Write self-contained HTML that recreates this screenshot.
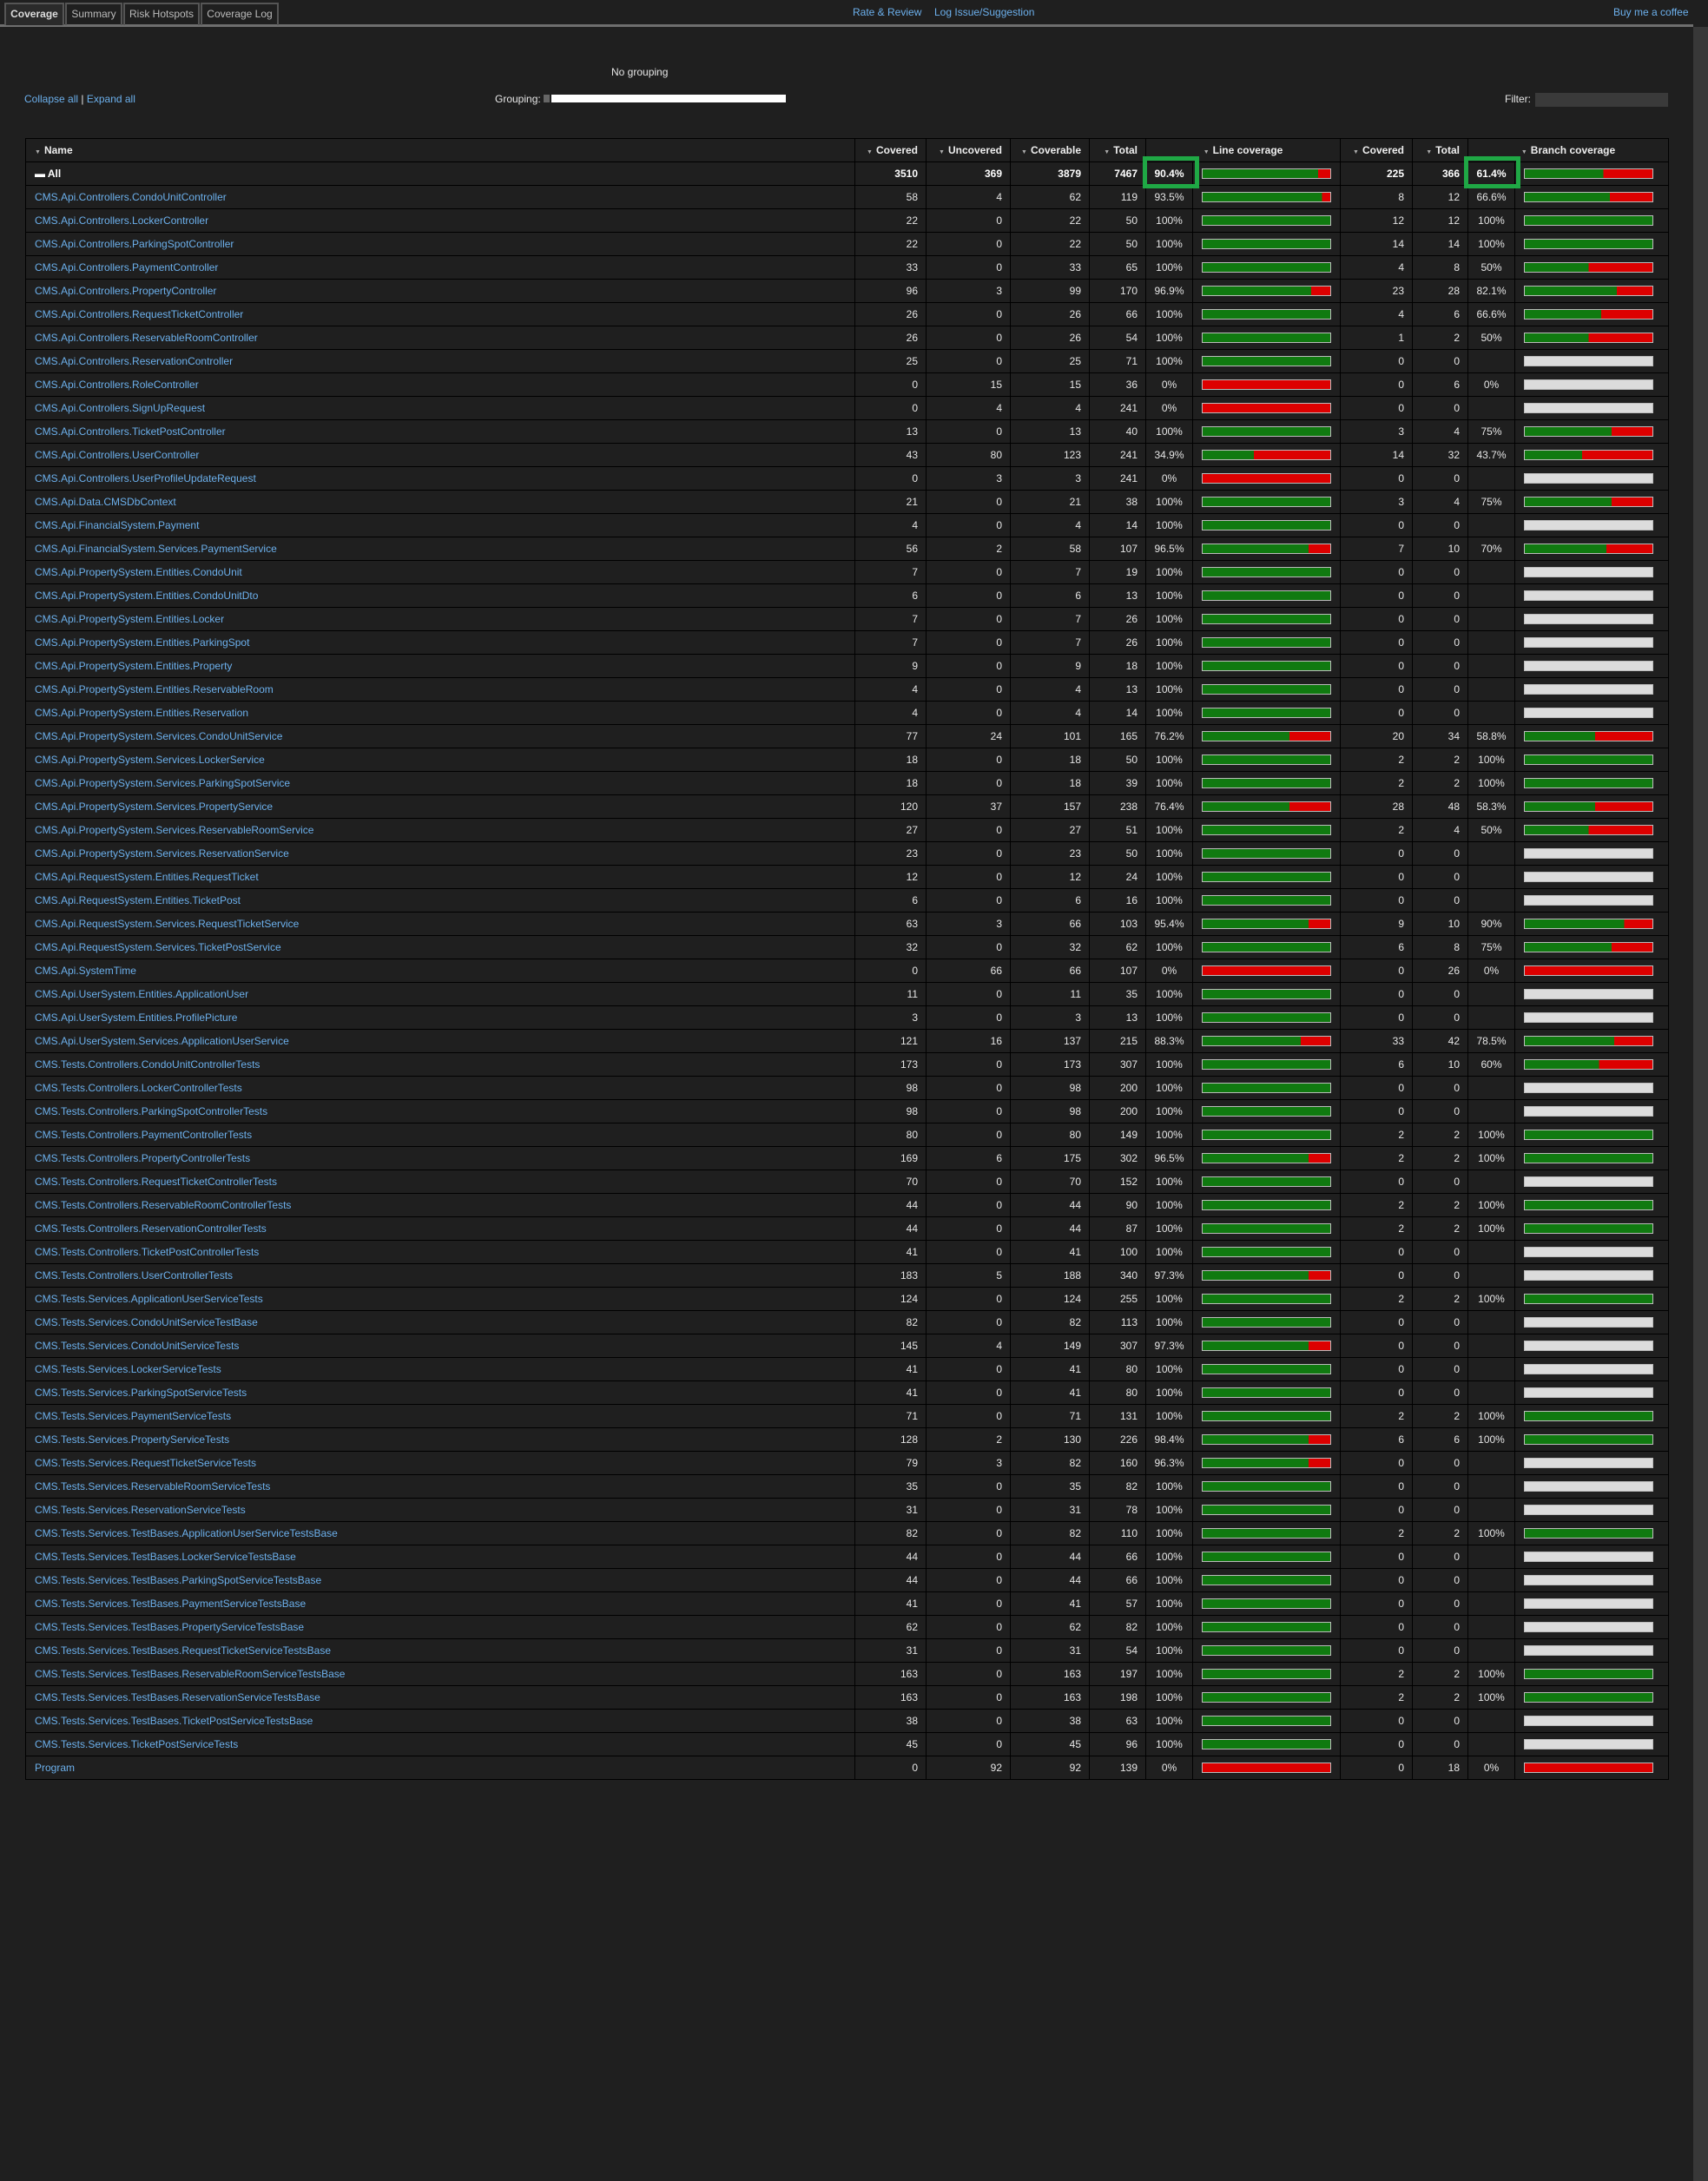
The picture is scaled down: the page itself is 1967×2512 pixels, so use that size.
<!DOCTYPE html>
<html><head><meta charset="utf-8"><style>
*{box-sizing:border-box}
html,body{margin:0;padding:0}
body{width:1967px;height:2512px;background:#1f1f1f;color:#e6e6e6;font-family:"Liberation Sans",sans-serif;font-size:11px;position:relative;overflow:hidden}
a{color:#6cb0ec;text-decoration:none}
.tabs{position:absolute;left:0;top:0;width:1950px;height:31px;border-bottom:3px solid #6e6e6e}
.tab{position:absolute;top:3px;height:26px;border:2px solid #555;border-bottom:none;color:#bbb;font-size:12px;line-height:23px;text-align:center}
.tab.act{background:#2a2a2a;color:#ddd;font-weight:bold}
.sb{position:absolute;right:0;top:31px;width:17px;height:2481px;background:#383838}
.top a{position:absolute;top:7px;font-size:12px}
.abs{position:absolute}
table{position:absolute;left:29px;top:159px;border-collapse:collapse;table-layout:fixed;width:1892px;font-size:12px}
td,th{border:1px solid #000;height:27px;padding:0 9px 0 0;text-align:right;white-space:nowrap;overflow:hidden}
th{font-weight:bold;color:#eee}
th .ar,.ar{color:#aaa;font-size:7px;margin-right:4px}
td.n,th.n{text-align:left;padding-left:10px}
td.p{text-align:center;padding:0}
td.b{text-align:left;padding:0 0 0 10px}
td.b i{display:block;width:149px;height:12px;border:1px solid #bbb;background:linear-gradient(90deg,#107a10 var(--g),#dd0000 0)}
td.b i.z{background:#dcdcdc}
tr.all td{font-weight:bold;color:#fff}
.hl{position:absolute;border:5px solid #1fa845;width:65px;height:37px;top:180px}
</style></head><body>
<div class="tabs">
<div class="tab act" style="left:5px;width:69px">Coverage</div>
<div class="tab" style="left:75px;width:66px">Summary</div>
<div class="tab" style="left:142px;width:88px">Risk Hotspots</div>
<div class="tab" style="left:231px;width:90px">Coverage Log</div>
</div>
<div class="top"><a style="left:982px">Rate &amp; Review</a><a style="left:1076px">Log Issue/Suggestion</a><a style="left:1858px">Buy me a coffee</a></div>
<div class="sb"></div>
<div class="abs" style="left:704px;top:76px;font-size:12px">No grouping</div>
<div class="abs" style="left:28px;top:107px;font-size:12px"><a>Collapse all</a> | <a>Expand all</a></div>
<div class="abs" style="left:570px;top:107px;font-size:12px">Grouping:</div>
<div class="abs" style="left:626px;top:109px;width:7px;height:9px;background:#666"></div>
<div class="abs" style="left:635px;top:109px;width:270px;height:9px;background:#fff"></div>
<div class="abs" style="left:1733px;top:107px;font-size:12px">Filter:</div>
<div class="abs" style="left:1768px;top:107px;width:153px;height:16px;background:#3a3a3a"></div>
<table>
<colgroup><col style="width:955px"><col style="width:82px"><col style="width:97px"><col style="width:91px"><col style="width:65px"><col style="width:54px"><col style="width:170px"><col style="width:83px"><col style="width:64px"><col style="width:54px"><col style="width:177px"></colgroup>
<tr><th class="n"><span class="ar">▼</span>Name</th><th><span class="ar">▼</span>Covered</th><th><span class="ar">▼</span>Uncovered</th><th><span class="ar">▼</span>Coverable</th><th><span class="ar">▼</span>Total</th><th colspan="2" style="text-align:center;padding:0"><span class="ar">▼</span>Line coverage</th><th><span class="ar">▼</span>Covered</th><th><span class="ar">▼</span>Total</th><th colspan="2" style="text-align:center;padding:0"><span class="ar">▼</span>Branch coverage</th></tr>
<tr class="all"><td class="n">▬ All</td><td>3510</td><td>369</td><td>3879</td><td>7467</td><td class="p">90.4%</td><td class="b"><i style="--g:90.4%"></i></td><td>225</td><td>366</td><td class="p">61.4%</td><td class="b"><i style="--g:61.4%"></i></td></tr>
<tr><td class="n"><a>CMS.Api.Controllers.CondoUnitController</a></td><td>58</td><td>4</td><td>62</td><td>119</td><td class="p">93.5%</td><td class="b"><i style="--g:93.5%"></i></td><td>8</td><td>12</td><td class="p">66.6%</td><td class="b"><i style="--g:66.6%"></i></td></tr>
<tr><td class="n"><a>CMS.Api.Controllers.LockerController</a></td><td>22</td><td>0</td><td>22</td><td>50</td><td class="p">100%</td><td class="b"><i style="--g:100%"></i></td><td>12</td><td>12</td><td class="p">100%</td><td class="b"><i style="--g:100%"></i></td></tr>
<tr><td class="n"><a>CMS.Api.Controllers.ParkingSpotController</a></td><td>22</td><td>0</td><td>22</td><td>50</td><td class="p">100%</td><td class="b"><i style="--g:100%"></i></td><td>14</td><td>14</td><td class="p">100%</td><td class="b"><i style="--g:100%"></i></td></tr>
<tr><td class="n"><a>CMS.Api.Controllers.PaymentController</a></td><td>33</td><td>0</td><td>33</td><td>65</td><td class="p">100%</td><td class="b"><i style="--g:100%"></i></td><td>4</td><td>8</td><td class="p">50%</td><td class="b"><i style="--g:50%"></i></td></tr>
<tr><td class="n"><a>CMS.Api.Controllers.PropertyController</a></td><td>96</td><td>3</td><td>99</td><td>170</td><td class="p">96.9%</td><td class="b"><i style="--g:85%"></i></td><td>23</td><td>28</td><td class="p">82.1%</td><td class="b"><i style="--g:72%"></i></td></tr>
<tr><td class="n"><a>CMS.Api.Controllers.RequestTicketController</a></td><td>26</td><td>0</td><td>26</td><td>66</td><td class="p">100%</td><td class="b"><i style="--g:100%"></i></td><td>4</td><td>6</td><td class="p">66.6%</td><td class="b"><i style="--g:60%"></i></td></tr>
<tr><td class="n"><a>CMS.Api.Controllers.ReservableRoomController</a></td><td>26</td><td>0</td><td>26</td><td>54</td><td class="p">100%</td><td class="b"><i style="--g:100%"></i></td><td>1</td><td>2</td><td class="p">50%</td><td class="b"><i style="--g:50%"></i></td></tr>
<tr><td class="n"><a>CMS.Api.Controllers.ReservationController</a></td><td>25</td><td>0</td><td>25</td><td>71</td><td class="p">100%</td><td class="b"><i style="--g:100%"></i></td><td>0</td><td>0</td><td class="p"></td><td class="b"><i class="z"></i></td></tr>
<tr><td class="n"><a>CMS.Api.Controllers.RoleController</a></td><td>0</td><td>15</td><td>15</td><td>36</td><td class="p">0%</td><td class="b"><i style="--g:0%"></i></td><td>0</td><td>6</td><td class="p">0%</td><td class="b"><i class="z"></i></td></tr>
<tr><td class="n"><a>CMS.Api.Controllers.SignUpRequest</a></td><td>0</td><td>4</td><td>4</td><td>241</td><td class="p">0%</td><td class="b"><i style="--g:0%"></i></td><td>0</td><td>0</td><td class="p"></td><td class="b"><i class="z"></i></td></tr>
<tr><td class="n"><a>CMS.Api.Controllers.TicketPostController</a></td><td>13</td><td>0</td><td>13</td><td>40</td><td class="p">100%</td><td class="b"><i style="--g:100%"></i></td><td>3</td><td>4</td><td class="p">75%</td><td class="b"><i style="--g:68%"></i></td></tr>
<tr><td class="n"><a>CMS.Api.Controllers.UserController</a></td><td>43</td><td>80</td><td>123</td><td>241</td><td class="p">34.9%</td><td class="b"><i style="--g:40%"></i></td><td>14</td><td>32</td><td class="p">43.7%</td><td class="b"><i style="--g:45%"></i></td></tr>
<tr><td class="n"><a>CMS.Api.Controllers.UserProfileUpdateRequest</a></td><td>0</td><td>3</td><td>3</td><td>241</td><td class="p">0%</td><td class="b"><i style="--g:0%"></i></td><td>0</td><td>0</td><td class="p"></td><td class="b"><i class="z"></i></td></tr>
<tr><td class="n"><a>CMS.Api.Data.CMSDbContext</a></td><td>21</td><td>0</td><td>21</td><td>38</td><td class="p">100%</td><td class="b"><i style="--g:100%"></i></td><td>3</td><td>4</td><td class="p">75%</td><td class="b"><i style="--g:68%"></i></td></tr>
<tr><td class="n"><a>CMS.Api.FinancialSystem.Payment</a></td><td>4</td><td>0</td><td>4</td><td>14</td><td class="p">100%</td><td class="b"><i style="--g:100%"></i></td><td>0</td><td>0</td><td class="p"></td><td class="b"><i class="z"></i></td></tr>
<tr><td class="n"><a>CMS.Api.FinancialSystem.Services.PaymentService</a></td><td>56</td><td>2</td><td>58</td><td>107</td><td class="p">96.5%</td><td class="b"><i style="--g:83%"></i></td><td>7</td><td>10</td><td class="p">70%</td><td class="b"><i style="--g:64%"></i></td></tr>
<tr><td class="n"><a>CMS.Api.PropertySystem.Entities.CondoUnit</a></td><td>7</td><td>0</td><td>7</td><td>19</td><td class="p">100%</td><td class="b"><i style="--g:100%"></i></td><td>0</td><td>0</td><td class="p"></td><td class="b"><i class="z"></i></td></tr>
<tr><td class="n"><a>CMS.Api.PropertySystem.Entities.CondoUnitDto</a></td><td>6</td><td>0</td><td>6</td><td>13</td><td class="p">100%</td><td class="b"><i style="--g:100%"></i></td><td>0</td><td>0</td><td class="p"></td><td class="b"><i class="z"></i></td></tr>
<tr><td class="n"><a>CMS.Api.PropertySystem.Entities.Locker</a></td><td>7</td><td>0</td><td>7</td><td>26</td><td class="p">100%</td><td class="b"><i style="--g:100%"></i></td><td>0</td><td>0</td><td class="p"></td><td class="b"><i class="z"></i></td></tr>
<tr><td class="n"><a>CMS.Api.PropertySystem.Entities.ParkingSpot</a></td><td>7</td><td>0</td><td>7</td><td>26</td><td class="p">100%</td><td class="b"><i style="--g:100%"></i></td><td>0</td><td>0</td><td class="p"></td><td class="b"><i class="z"></i></td></tr>
<tr><td class="n"><a>CMS.Api.PropertySystem.Entities.Property</a></td><td>9</td><td>0</td><td>9</td><td>18</td><td class="p">100%</td><td class="b"><i style="--g:100%"></i></td><td>0</td><td>0</td><td class="p"></td><td class="b"><i class="z"></i></td></tr>
<tr><td class="n"><a>CMS.Api.PropertySystem.Entities.ReservableRoom</a></td><td>4</td><td>0</td><td>4</td><td>13</td><td class="p">100%</td><td class="b"><i style="--g:100%"></i></td><td>0</td><td>0</td><td class="p"></td><td class="b"><i class="z"></i></td></tr>
<tr><td class="n"><a>CMS.Api.PropertySystem.Entities.Reservation</a></td><td>4</td><td>0</td><td>4</td><td>14</td><td class="p">100%</td><td class="b"><i style="--g:100%"></i></td><td>0</td><td>0</td><td class="p"></td><td class="b"><i class="z"></i></td></tr>
<tr><td class="n"><a>CMS.Api.PropertySystem.Services.CondoUnitService</a></td><td>77</td><td>24</td><td>101</td><td>165</td><td class="p">76.2%</td><td class="b"><i style="--g:68%"></i></td><td>20</td><td>34</td><td class="p">58.8%</td><td class="b"><i style="--g:55%"></i></td></tr>
<tr><td class="n"><a>CMS.Api.PropertySystem.Services.LockerService</a></td><td>18</td><td>0</td><td>18</td><td>50</td><td class="p">100%</td><td class="b"><i style="--g:100%"></i></td><td>2</td><td>2</td><td class="p">100%</td><td class="b"><i style="--g:100%"></i></td></tr>
<tr><td class="n"><a>CMS.Api.PropertySystem.Services.ParkingSpotService</a></td><td>18</td><td>0</td><td>18</td><td>39</td><td class="p">100%</td><td class="b"><i style="--g:100%"></i></td><td>2</td><td>2</td><td class="p">100%</td><td class="b"><i style="--g:100%"></i></td></tr>
<tr><td class="n"><a>CMS.Api.PropertySystem.Services.PropertyService</a></td><td>120</td><td>37</td><td>157</td><td>238</td><td class="p">76.4%</td><td class="b"><i style="--g:68%"></i></td><td>28</td><td>48</td><td class="p">58.3%</td><td class="b"><i style="--g:55%"></i></td></tr>
<tr><td class="n"><a>CMS.Api.PropertySystem.Services.ReservableRoomService</a></td><td>27</td><td>0</td><td>27</td><td>51</td><td class="p">100%</td><td class="b"><i style="--g:100%"></i></td><td>2</td><td>4</td><td class="p">50%</td><td class="b"><i style="--g:50%"></i></td></tr>
<tr><td class="n"><a>CMS.Api.PropertySystem.Services.ReservationService</a></td><td>23</td><td>0</td><td>23</td><td>50</td><td class="p">100%</td><td class="b"><i style="--g:100%"></i></td><td>0</td><td>0</td><td class="p"></td><td class="b"><i class="z"></i></td></tr>
<tr><td class="n"><a>CMS.Api.RequestSystem.Entities.RequestTicket</a></td><td>12</td><td>0</td><td>12</td><td>24</td><td class="p">100%</td><td class="b"><i style="--g:100%"></i></td><td>0</td><td>0</td><td class="p"></td><td class="b"><i class="z"></i></td></tr>
<tr><td class="n"><a>CMS.Api.RequestSystem.Entities.TicketPost</a></td><td>6</td><td>0</td><td>6</td><td>16</td><td class="p">100%</td><td class="b"><i style="--g:100%"></i></td><td>0</td><td>0</td><td class="p"></td><td class="b"><i class="z"></i></td></tr>
<tr><td class="n"><a>CMS.Api.RequestSystem.Services.RequestTicketService</a></td><td>63</td><td>3</td><td>66</td><td>103</td><td class="p">95.4%</td><td class="b"><i style="--g:83%"></i></td><td>9</td><td>10</td><td class="p">90%</td><td class="b"><i style="--g:78%"></i></td></tr>
<tr><td class="n"><a>CMS.Api.RequestSystem.Services.TicketPostService</a></td><td>32</td><td>0</td><td>32</td><td>62</td><td class="p">100%</td><td class="b"><i style="--g:100%"></i></td><td>6</td><td>8</td><td class="p">75%</td><td class="b"><i style="--g:68%"></i></td></tr>
<tr><td class="n"><a>CMS.Api.SystemTime</a></td><td>0</td><td>66</td><td>66</td><td>107</td><td class="p">0%</td><td class="b"><i style="--g:0%"></i></td><td>0</td><td>26</td><td class="p">0%</td><td class="b"><i style="--g:0%"></i></td></tr>
<tr><td class="n"><a>CMS.Api.UserSystem.Entities.ApplicationUser</a></td><td>11</td><td>0</td><td>11</td><td>35</td><td class="p">100%</td><td class="b"><i style="--g:100%"></i></td><td>0</td><td>0</td><td class="p"></td><td class="b"><i class="z"></i></td></tr>
<tr><td class="n"><a>CMS.Api.UserSystem.Entities.ProfilePicture</a></td><td>3</td><td>0</td><td>3</td><td>13</td><td class="p">100%</td><td class="b"><i style="--g:100%"></i></td><td>0</td><td>0</td><td class="p"></td><td class="b"><i class="z"></i></td></tr>
<tr><td class="n"><a>CMS.Api.UserSystem.Services.ApplicationUserService</a></td><td>121</td><td>16</td><td>137</td><td>215</td><td class="p">88.3%</td><td class="b"><i style="--g:77%"></i></td><td>33</td><td>42</td><td class="p">78.5%</td><td class="b"><i style="--g:70%"></i></td></tr>
<tr><td class="n"><a>CMS.Tests.Controllers.CondoUnitControllerTests</a></td><td>173</td><td>0</td><td>173</td><td>307</td><td class="p">100%</td><td class="b"><i style="--g:100%"></i></td><td>6</td><td>10</td><td class="p">60%</td><td class="b"><i style="--g:58%"></i></td></tr>
<tr><td class="n"><a>CMS.Tests.Controllers.LockerControllerTests</a></td><td>98</td><td>0</td><td>98</td><td>200</td><td class="p">100%</td><td class="b"><i style="--g:100%"></i></td><td>0</td><td>0</td><td class="p"></td><td class="b"><i class="z"></i></td></tr>
<tr><td class="n"><a>CMS.Tests.Controllers.ParkingSpotControllerTests</a></td><td>98</td><td>0</td><td>98</td><td>200</td><td class="p">100%</td><td class="b"><i style="--g:100%"></i></td><td>0</td><td>0</td><td class="p"></td><td class="b"><i class="z"></i></td></tr>
<tr><td class="n"><a>CMS.Tests.Controllers.PaymentControllerTests</a></td><td>80</td><td>0</td><td>80</td><td>149</td><td class="p">100%</td><td class="b"><i style="--g:100%"></i></td><td>2</td><td>2</td><td class="p">100%</td><td class="b"><i style="--g:100%"></i></td></tr>
<tr><td class="n"><a>CMS.Tests.Controllers.PropertyControllerTests</a></td><td>169</td><td>6</td><td>175</td><td>302</td><td class="p">96.5%</td><td class="b"><i style="--g:83%"></i></td><td>2</td><td>2</td><td class="p">100%</td><td class="b"><i style="--g:100%"></i></td></tr>
<tr><td class="n"><a>CMS.Tests.Controllers.RequestTicketControllerTests</a></td><td>70</td><td>0</td><td>70</td><td>152</td><td class="p">100%</td><td class="b"><i style="--g:100%"></i></td><td>0</td><td>0</td><td class="p"></td><td class="b"><i class="z"></i></td></tr>
<tr><td class="n"><a>CMS.Tests.Controllers.ReservableRoomControllerTests</a></td><td>44</td><td>0</td><td>44</td><td>90</td><td class="p">100%</td><td class="b"><i style="--g:100%"></i></td><td>2</td><td>2</td><td class="p">100%</td><td class="b"><i style="--g:100%"></i></td></tr>
<tr><td class="n"><a>CMS.Tests.Controllers.ReservationControllerTests</a></td><td>44</td><td>0</td><td>44</td><td>87</td><td class="p">100%</td><td class="b"><i style="--g:100%"></i></td><td>2</td><td>2</td><td class="p">100%</td><td class="b"><i style="--g:100%"></i></td></tr>
<tr><td class="n"><a>CMS.Tests.Controllers.TicketPostControllerTests</a></td><td>41</td><td>0</td><td>41</td><td>100</td><td class="p">100%</td><td class="b"><i style="--g:100%"></i></td><td>0</td><td>0</td><td class="p"></td><td class="b"><i class="z"></i></td></tr>
<tr><td class="n"><a>CMS.Tests.Controllers.UserControllerTests</a></td><td>183</td><td>5</td><td>188</td><td>340</td><td class="p">97.3%</td><td class="b"><i style="--g:83%"></i></td><td>0</td><td>0</td><td class="p"></td><td class="b"><i class="z"></i></td></tr>
<tr><td class="n"><a>CMS.Tests.Services.ApplicationUserServiceTests</a></td><td>124</td><td>0</td><td>124</td><td>255</td><td class="p">100%</td><td class="b"><i style="--g:100%"></i></td><td>2</td><td>2</td><td class="p">100%</td><td class="b"><i style="--g:100%"></i></td></tr>
<tr><td class="n"><a>CMS.Tests.Services.CondoUnitServiceTestBase</a></td><td>82</td><td>0</td><td>82</td><td>113</td><td class="p">100%</td><td class="b"><i style="--g:100%"></i></td><td>0</td><td>0</td><td class="p"></td><td class="b"><i class="z"></i></td></tr>
<tr><td class="n"><a>CMS.Tests.Services.CondoUnitServiceTests</a></td><td>145</td><td>4</td><td>149</td><td>307</td><td class="p">97.3%</td><td class="b"><i style="--g:83%"></i></td><td>0</td><td>0</td><td class="p"></td><td class="b"><i class="z"></i></td></tr>
<tr><td class="n"><a>CMS.Tests.Services.LockerServiceTests</a></td><td>41</td><td>0</td><td>41</td><td>80</td><td class="p">100%</td><td class="b"><i style="--g:100%"></i></td><td>0</td><td>0</td><td class="p"></td><td class="b"><i class="z"></i></td></tr>
<tr><td class="n"><a>CMS.Tests.Services.ParkingSpotServiceTests</a></td><td>41</td><td>0</td><td>41</td><td>80</td><td class="p">100%</td><td class="b"><i style="--g:100%"></i></td><td>0</td><td>0</td><td class="p"></td><td class="b"><i class="z"></i></td></tr>
<tr><td class="n"><a>CMS.Tests.Services.PaymentServiceTests</a></td><td>71</td><td>0</td><td>71</td><td>131</td><td class="p">100%</td><td class="b"><i style="--g:100%"></i></td><td>2</td><td>2</td><td class="p">100%</td><td class="b"><i style="--g:100%"></i></td></tr>
<tr><td class="n"><a>CMS.Tests.Services.PropertyServiceTests</a></td><td>128</td><td>2</td><td>130</td><td>226</td><td class="p">98.4%</td><td class="b"><i style="--g:83%"></i></td><td>6</td><td>6</td><td class="p">100%</td><td class="b"><i style="--g:100%"></i></td></tr>
<tr><td class="n"><a>CMS.Tests.Services.RequestTicketServiceTests</a></td><td>79</td><td>3</td><td>82</td><td>160</td><td class="p">96.3%</td><td class="b"><i style="--g:83%"></i></td><td>0</td><td>0</td><td class="p"></td><td class="b"><i class="z"></i></td></tr>
<tr><td class="n"><a>CMS.Tests.Services.ReservableRoomServiceTests</a></td><td>35</td><td>0</td><td>35</td><td>82</td><td class="p">100%</td><td class="b"><i style="--g:100%"></i></td><td>0</td><td>0</td><td class="p"></td><td class="b"><i class="z"></i></td></tr>
<tr><td class="n"><a>CMS.Tests.Services.ReservationServiceTests</a></td><td>31</td><td>0</td><td>31</td><td>78</td><td class="p">100%</td><td class="b"><i style="--g:100%"></i></td><td>0</td><td>0</td><td class="p"></td><td class="b"><i class="z"></i></td></tr>
<tr><td class="n"><a>CMS.Tests.Services.TestBases.ApplicationUserServiceTestsBase</a></td><td>82</td><td>0</td><td>82</td><td>110</td><td class="p">100%</td><td class="b"><i style="--g:100%"></i></td><td>2</td><td>2</td><td class="p">100%</td><td class="b"><i style="--g:100%"></i></td></tr>
<tr><td class="n"><a>CMS.Tests.Services.TestBases.LockerServiceTestsBase</a></td><td>44</td><td>0</td><td>44</td><td>66</td><td class="p">100%</td><td class="b"><i style="--g:100%"></i></td><td>0</td><td>0</td><td class="p"></td><td class="b"><i class="z"></i></td></tr>
<tr><td class="n"><a>CMS.Tests.Services.TestBases.ParkingSpotServiceTestsBase</a></td><td>44</td><td>0</td><td>44</td><td>66</td><td class="p">100%</td><td class="b"><i style="--g:100%"></i></td><td>0</td><td>0</td><td class="p"></td><td class="b"><i class="z"></i></td></tr>
<tr><td class="n"><a>CMS.Tests.Services.TestBases.PaymentServiceTestsBase</a></td><td>41</td><td>0</td><td>41</td><td>57</td><td class="p">100%</td><td class="b"><i style="--g:100%"></i></td><td>0</td><td>0</td><td class="p"></td><td class="b"><i class="z"></i></td></tr>
<tr><td class="n"><a>CMS.Tests.Services.TestBases.PropertyServiceTestsBase</a></td><td>62</td><td>0</td><td>62</td><td>82</td><td class="p">100%</td><td class="b"><i style="--g:100%"></i></td><td>0</td><td>0</td><td class="p"></td><td class="b"><i class="z"></i></td></tr>
<tr><td class="n"><a>CMS.Tests.Services.TestBases.RequestTicketServiceTestsBase</a></td><td>31</td><td>0</td><td>31</td><td>54</td><td class="p">100%</td><td class="b"><i style="--g:100%"></i></td><td>0</td><td>0</td><td class="p"></td><td class="b"><i class="z"></i></td></tr>
<tr><td class="n"><a>CMS.Tests.Services.TestBases.ReservableRoomServiceTestsBase</a></td><td>163</td><td>0</td><td>163</td><td>197</td><td class="p">100%</td><td class="b"><i style="--g:100%"></i></td><td>2</td><td>2</td><td class="p">100%</td><td class="b"><i style="--g:100%"></i></td></tr>
<tr><td class="n"><a>CMS.Tests.Services.TestBases.ReservationServiceTestsBase</a></td><td>163</td><td>0</td><td>163</td><td>198</td><td class="p">100%</td><td class="b"><i style="--g:100%"></i></td><td>2</td><td>2</td><td class="p">100%</td><td class="b"><i style="--g:100%"></i></td></tr>
<tr><td class="n"><a>CMS.Tests.Services.TestBases.TicketPostServiceTestsBase</a></td><td>38</td><td>0</td><td>38</td><td>63</td><td class="p">100%</td><td class="b"><i style="--g:100%"></i></td><td>0</td><td>0</td><td class="p"></td><td class="b"><i class="z"></i></td></tr>
<tr><td class="n"><a>CMS.Tests.Services.TicketPostServiceTests</a></td><td>45</td><td>0</td><td>45</td><td>96</td><td class="p">100%</td><td class="b"><i style="--g:100%"></i></td><td>0</td><td>0</td><td class="p"></td><td class="b"><i class="z"></i></td></tr>
<tr><td class="n"><a>Program</a></td><td>0</td><td>92</td><td>92</td><td>139</td><td class="p">0%</td><td class="b"><i style="--g:0%"></i></td><td>0</td><td>18</td><td class="p">0%</td><td class="b"><i style="--g:0%"></i></td></tr>
</table>
<div class="hl" style="left:1316px"></div>
<div class="hl" style="left:1686px"></div>
</body></html>
